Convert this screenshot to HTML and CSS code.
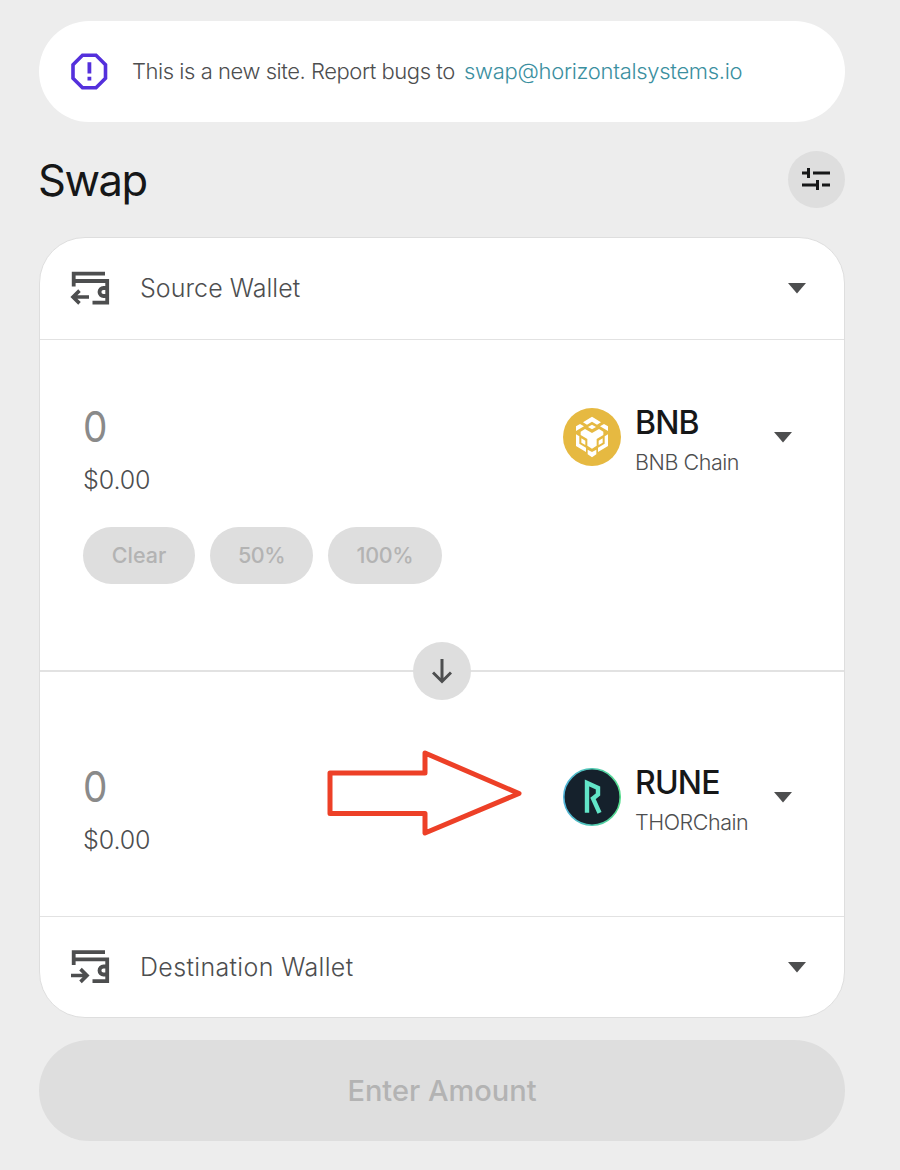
FILE: index.html
```html
<!DOCTYPE html>
<html lang="en">
<head>
<meta charset="utf-8">
<title>Swap</title>
<link rel="stylesheet" href="styles.css">
</head>
<body>
<main class="page">
  <div class="banner">
    <svg class="banner-icon" width="38" height="38" viewBox="0 0 38 38"><path d="M12.500 2.200h13.500l9.500 9.500v13.500l-9.500 9.500H12.500l-9.500-9.500V11.700z" fill="none" stroke="#5430dc" stroke-width="3.600"/><path d="M17.500 9.300h3.800v11.200h-3.800zM17.500 23.800h3.800v3.600h-3.800z" fill="#5430dc"/></svg>
    <span class="banner-text">This is a new site. Report bugs to</span>
    <a class="banner-link">swap@horizontalsystems.io</a>
  </div>

  <header class="heading">
    <h1 class="title">Swap</h1>
    <button class="settings"><svg width="28" height="24" viewBox="0 0 28 24"><path d="M0 6h6M11 6h17M0 18h15M20 18h8" stroke="#161718" stroke-width="3"/><path d="M6.500 1v10M15.500 13v10" stroke="#161718" stroke-width="3"/></svg></button>
  </header>

  <section class="card">
    <div class="wallet">
      <svg width="40" height="36" viewBox="0 0 40 36"><path d="M35 2.700H3.700V15.500M3.700 10H37.200V31.600H22.500M37 17h-3.500a4 4 0 0 0 0 8H37" fill="none" stroke="#4d4e4f" stroke-width="3.800"/><path d="M19 26H3M9.500 19.600L3 26l6.500 6.400" fill="none" stroke="#4d4e4f" stroke-width="3.600"/></svg>
      <span class="wallet-label source">Source Wallet</span>
      <svg class="caret" width="18" height="11" viewBox="0 0 18 11"><path d="M0 0h18L9 10.500z" fill="#4d4e4f"/></svg>
    </div>

    <div class="panel from">
      <div class="amount">
        <div class="value">0</div>
        <div class="fiat">$0.00</div>
        <div class="chips">
          <button class="chip clear">Clear</button>
          <button class="chip half">50%</button>
          <button class="chip full">100%</button>
        </div>
      </div>
      <div class="asset">
        <svg width="58" height="58" viewBox="39 39 174 174"><circle cx="126" cy="126" r="87" fill="#e6b941"/><g fill="#fff"><path d="M99 82L126 65l27 17-12 7-15-9-15 9z"/><path d="M114 96l12-7 12 7-12 7z"/><path d="M78 94l12-7 12 7-24 14zM174 94l-12-7-12 7 24 14z"/><path d="M92 110l13-8 21 12 21-12 13 8v10l-20 12v20l-14 9-14-9v-20l-20-12z"/><path d="M78 118l10 6v22l20 12v13l-30-18zM174 118l-10 6v22l-20 12v13l30-18z"/><path d="M94 130l12 7v13l-12-7zM158 130l-12 7v13l12-7z"/><path d="M113 164l13 7 13-7v14l-13 9-13-9z"/></g></svg>
        <div class="asset-text"><div class="symbol bnb">BNB</div><div class="chain bnb-chain">BNB Chain</div></div>
        <svg class="caret" width="18" height="11" viewBox="0 0 18 11"><path d="M0 0h18L9 10.500z" fill="#4d4e4f"/></svg>
      </div>
      <button class="switch"><svg width="20" height="26" viewBox="0 0 20 26"><path d="M10 1v22M1 14.500l9 9 9-9" fill="none" stroke="#4d4e4f" stroke-width="3"/></svg></button>
    </div>

    <div class="panel to">
      <div class="amount">
        <div class="value">0</div>
        <div class="fiat">$0.00</div>
      </div>
      <div class="asset">
        <svg width="58" height="58" viewBox="0 0 58 58"><defs><linearGradient id="ring"><stop offset="0" stop-color="#4fb3d9"/><stop offset=".5" stop-color="#4fc8b2"/><stop offset="1" stop-color="#55dc8c"/></linearGradient></defs><circle cx="29" cy="29" r="28.200" fill="#15212c" stroke="url(#ring)" stroke-width="1.600"/><path d="M24 44.800V15l11 5v6.500L30 30.500l6.500 14.300" fill="none" stroke="#62e5c8" stroke-width="4.400"/></svg>
        <div class="asset-text"><div class="symbol rune">RUNE</div><div class="chain thor-chain">THORChain</div></div>
        <svg class="caret" width="18" height="11" viewBox="0 0 18 11"><path d="M0 0h18L9 10.500z" fill="#4d4e4f"/></svg>
      </div>
      <svg class="pointer" width="196" height="88" viewBox="0 0 196 88"><path d="M4 24h95V4l94 40.500L99 84V64.500H4z" fill="none" stroke="#ed4027" stroke-width="5" stroke-linejoin="round"/></svg>
    </div>

    <div class="wallet">
      <svg width="40" height="36" viewBox="0 0 40 36"><path d="M35 2.200H3.700V15M3.700 9.300H37.200V31.200H22.500M37 16.500h-3.500a4 4 0 0 0 0 8H37" fill="none" stroke="#4d4e4f" stroke-width="3.800"/><path d="M1 25.500h16M10.500 19.100L17 25.500l-6.500 6.400" fill="none" stroke="#4d4e4f" stroke-width="3.600"/></svg>
      <span class="wallet-label destination">Destination Wallet</span>
      <svg class="caret" width="18" height="11" viewBox="0 0 18 11"><path d="M0 0h18L9 10.500z" fill="#4d4e4f"/></svg>
    </div>
  </section>

  <button class="submit"><span class="submit-text">Enter Amount</span></button>
</main>
</body>
</html>
```
FILE: styles.css
```css
* { box-sizing: border-box; }
body { margin: 0; background: #ededed; color: #4d4e4f; font-family: Inter, "Liberation Sans", sans-serif; }
button { border: 0; padding: 0; font: inherit; background: #dedede; display: flex; align-items: center; justify-content: center; }
svg { flex: none; display: block; }
.page { width: 900px; height: 1170px; padding: 21px 55px 0 39px; overflow: hidden; }
.banner { height: 101px; border-radius: 51px; background: #fff; display: flex; align-items: center; padding-left: 31px; font-size: 22px; font-weight: 300; white-space: nowrap; }
.banner-text { margin-left: 24px; width: 332px; letter-spacing: -0.45px; }
.banner-text, .banner-link { padding-bottom: 2px; }
.banner-link { color: #3b8f9f; letter-spacing: -0.3px; }
.heading { height: 115px; display: flex; align-items: center; justify-content: space-between; }
.title { margin: 1px 0 0 -1px; font-size: 43.500px; line-height: 56px; font-weight: 400; color: #161718; letter-spacing: -1.5px; }
.settings { width: 57px; height: 57px; border-radius: 50%; }
.settings svg { margin: 0 2px 2px 0; }
.card { height: 781px; border: 1px solid #dedede; border-radius: 46px; background: #fff; }
.wallet { height: 101px; display: flex; align-items: center; padding: 0 38px 0 30px; }
.wallet .caret { margin-left: auto; }
.wallet-label { margin-left: 30px; padding-bottom: 2px; font-size: 25px; font-weight: 300; }
.source { letter-spacing: 0.05px; }
.destination { letter-spacing: 0.35px; }
.panel { position: relative; border-top: 1px solid #e2e2e2; display: flex; justify-content: space-between; padding-left: 43px; }
.from { height: 331px; padding-top: 64px; }
.to { height: 247px; padding-top: 92px; border-top-width: 2px; border-bottom: 1px solid #e2e2e2; }
.value { height: 46px; margin-top: -1px; line-height: 46px; font-size: 43px; color: #8a8a8a; transform: scaleX(.9); transform-origin: left; }
.fiat { margin-top: 16px; height: 30px; line-height: 30px; font-size: 25px; font-weight: 300; letter-spacing: -0.1px; }
.chips { display: flex; gap: 15px; margin-top: 32px; }
.chip { height: 57px; padding-bottom: 2px; border-radius: 29px; color: #b3b3b3; font-size: 21.500px; font-weight: 500; }
.clear { width: 112px; }
.half { width: 103px; letter-spacing: -0.5px; }
.full { width: 114px; letter-spacing: -0.3px; }
.asset { width: 281px; height: 66px; display: flex; align-items: center; }
.asset-text { margin: 7px 0 0 14px; width: 139px; }
.asset .caret { margin-top: 1px; }
.symbol { height: 38px; line-height: 38px; font-size: 32px; font-weight: 500; color: #161718; letter-spacing: -0.8px; }
.chain { height: 30px; margin-top: 5px; line-height: 30px; font-size: 21.500px; font-weight: 300; letter-spacing: -0.45px; }
.switch { position: absolute; left: 373px; bottom: -30px; z-index: 1; width: 58px; height: 58px; border-radius: 50%; }
.pointer { position: absolute; left: 286px; top: 77px; }
.submit { width: 806px; height: 101px; margin-top: 22px; border-radius: 51px; font-size: 29px; font-weight: 500; color: #b3b3b3; }
```
